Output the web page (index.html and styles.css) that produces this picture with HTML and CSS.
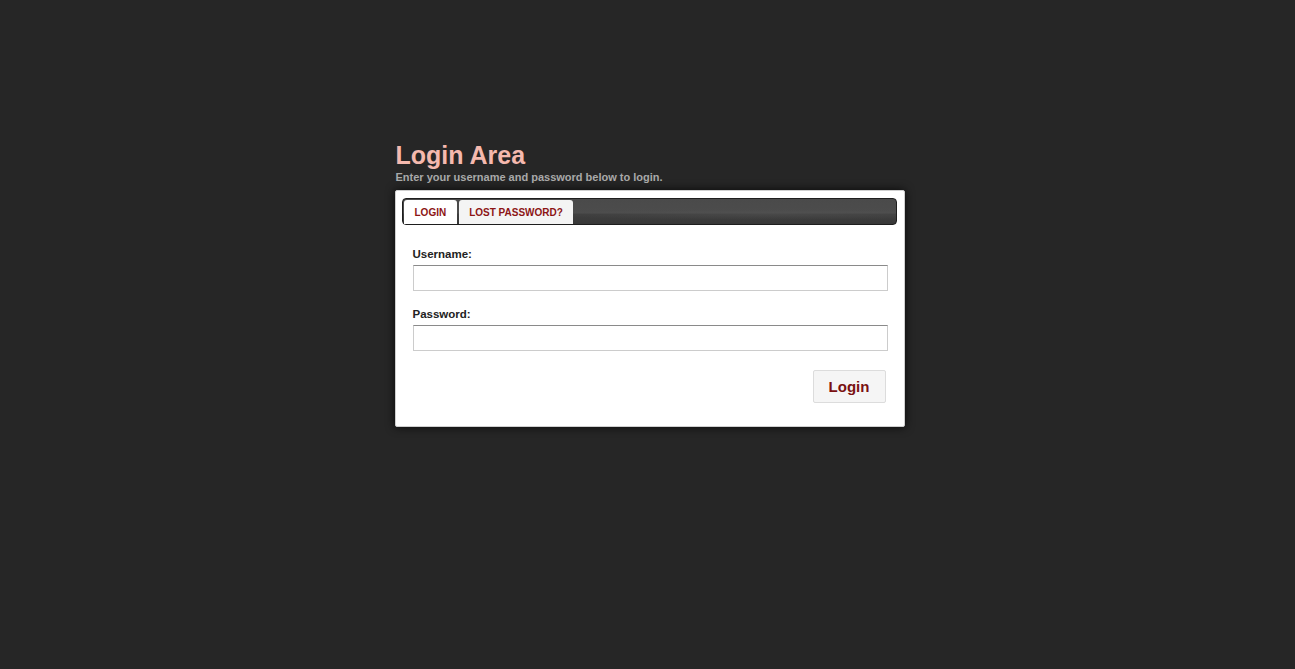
FILE: index.html
```html
<!DOCTYPE html>
<html>
<head>
<meta charset="utf-8">
<link rel="stylesheet" href="styles.css">
</head>
<body>
<div class="wrap">
  <h1 class="title">Login Area</h1>
  <p class="subtitle">Enter your username and password below to login.</p>
  <div class="box">
    <div class="tabbar">
      <a class="tab active">LOGIN</a>
      <a class="tab">LOST PASSWORD?</a>
    </div>
    <form class="form">
      <label class="label">Username:</label>
      <input class="input" type="text">
      <label class="label">Password:</label>
      <input class="input" type="password">
      <div class="actions">
        <button class="btn" type="button">Login</button>
      </div>
    </form>
  </div>
</div>
</body>
</html>
```
FILE: styles.css
```css
html, body {
  margin: 0;
  padding: 0;
  height: 100%;
}
body {
  background: #262626;
  font-family: "Liberation Sans", Arial, sans-serif;
}
.wrap {
  width: 510px;
  margin: 0 auto;
  padding-top: 140px;
  position: relative;
  left: 2px;
}
.title {
  margin: 0;
  font-family: "Liberation Sans", Arial, sans-serif;
  font-size: 25px;
  line-height: 30px;
  font-weight: bold;
  color: #f5b9ae;
  padding-left: 1px;
}
.subtitle {
  margin: 0 0 6px 0;
  font-family: "Liberation Sans", Arial, sans-serif;
  font-size: 11px;
  line-height: 14px;
  font-weight: bold;
  color: #a9a9a9;
  padding-left: 1px;
}
.box {
  background: #fff;
  border: 1px solid #cfcfcf;
  border-radius: 2px;
  box-shadow: 0 0 10px rgba(0,0,0,0.8);
  padding: 7px 7px 23px 6px;
}
.tabbar {
  height: 25px;
  border: 1px solid #1e1e1e;
  border-radius: 4px;
  background:
    radial-gradient(ellipse 70% 30% at 75% 62%, rgba(90,90,90,0.35), rgba(90,90,90,0) 70%),
    linear-gradient(180deg, #4a4a4a 0%, #4c4c4c 55%, #3e3e3e 62%, #383838 100%);
  display: flex;
  align-items: flex-end;
  padding-left: 1px;
  gap: 2px;
}
.tab {
  display: block;
  height: 24px;
  line-height: 25px;
  padding: 0 10px;
  font-family: "Liberation Sans", Arial, sans-serif;
  font-size: 10px;
  font-weight: bold;
  color: #8c1515;
  background: #f4f4f4;
  border-radius: 3px 3px 0 0;
  box-sizing: border-box;
}
.tab.active {
  background: #fff;
  padding: 0 11px;
}
.form {
  padding: 22px 9px 0 11px;
  display: flex;
  flex-direction: column;
}
.label {
  font-family: "Liberation Sans", Arial, sans-serif;
  font-size: 11.5px;
  font-weight: bold;
  color: #222;
  line-height: 14px;
  margin-bottom: 4px;
}
.input {
  height: 26px;
  box-sizing: border-box;
  border: 1px solid #cccccc;
  border-top-color: #8a8a8a;
  margin: 0 0 16px 0;
  padding: 0 4px;
  background: #fff;
  font-size: 13px;
}
.actions {
  display: flex;
  justify-content: flex-end;
  padding-right: 2px;
  margin-top: 3px;
}
.btn {
  width: 73px;
  height: 33px;
  background: #f5f5f5;
  border: 1px solid #dcdcdc;
  border-radius: 2px;
  font-family: "Liberation Sans", Arial, sans-serif;
  font-size: 15px;
  font-weight: bold;
  color: #7a1111;
  padding: 0;
}
```
